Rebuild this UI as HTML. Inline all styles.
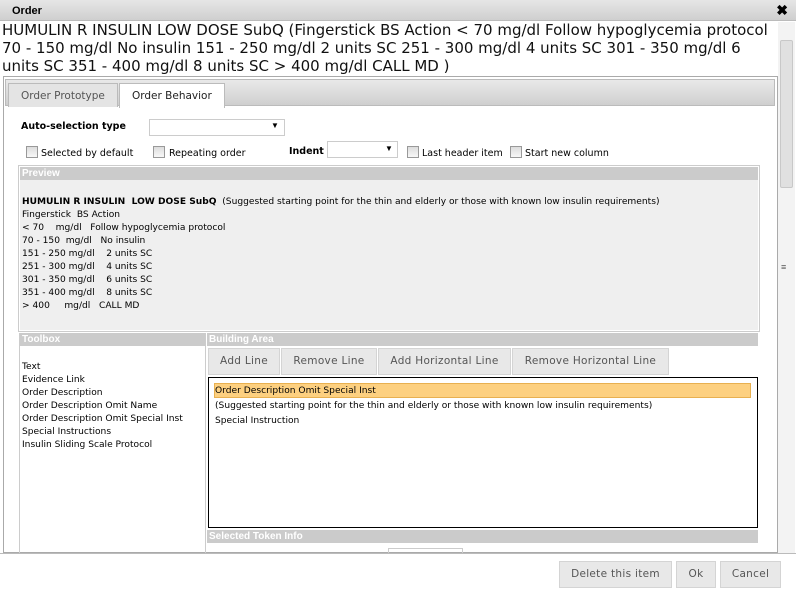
<!DOCTYPE html>
<html><head><style>
*{box-sizing:border-box;margin:0;padding:0}
body{width:796px;height:597px;background:#fff;font-family:"Liberation Sans",Arial,sans-serif;position:relative;overflow:hidden;color:#000}
.a{position:absolute}
.title{left:0;top:0;width:796px;height:21px;background:linear-gradient(#e6e6e6,#cfcfcf);border-bottom:1px solid #bbb;font-weight:bold;font-size:11px;padding:5px 12px}
.big{left:2px;top:21px;width:780px;font-size:15px;line-height:18px;color:#111;font-family:"DejaVu Sans",sans-serif;white-space:nowrap}
.frame{left:3px;top:76px;width:775px;height:477px;border:1px solid #aaa}
.tabs{left:5px;top:79px;width:770px;height:27px;background:linear-gradient(#e9e9e9,#cfcfcf);border:1px solid #bbb}
.tab{top:83px;height:24px;font-size:10.5px;padding:6px 12px;border:1px solid #bbb;border-bottom:none;color:#555;font-family:"DejaVu Sans",sans-serif}
.s{font-size:9.5px;font-family:"DejaVu Sans",sans-serif}
.cb{width:12px;height:12px;border:1px solid #999;background:linear-gradient(#ddd,#f8f8f8)}
.sel{height:17px;border:1px solid #ccc;background:#fff}
.hdr{background:#cbcbcb;color:#fff;font-size:10px;font-weight:bold;padding:1px 2px;height:13px;line-height:12px}
.btn{height:27px;background:#e8e8e8;border:1px solid #d4d4d4;color:#555;font-size:10.5px;text-align:center;line-height:25px;font-family:"DejaVu Sans",sans-serif;letter-spacing:0.3px}
.tl{font-family:"DejaVu Sans",sans-serif;line-height:13px;font-size:9.1px}
</style></head><body>
<div class="a title">Order</div>
<div class="a" style="right:8px;top:2px;font-size:14px;font-weight:bold">✖</div>
<div class="a big">HUMULIN R INSULIN LOW DOSE SubQ (Fingerstick BS Action &lt; 70 mg/dl Follow hypoglycemia protocol<br>70 - 150 mg/dl No insulin 151 - 250 mg/dl 2 units SC 251 - 300 mg/dl 4 units SC 301 - 350 mg/dl 6<br>units SC 351 - 400 mg/dl 8 units SC &gt; 400 mg/dl CALL MD )</div>
<div class="a" style="left:778px;top:22px;width:17px;height:531px;background:#f3f3f3"></div>
<div class="a" style="left:780px;top:40px;width:13px;height:148px;background:#e0e0e0;border:1px solid #c8c8c8;border-radius:2px"></div>
<div class="a" style="left:781px;top:262px;font-size:9px;color:#555">≡</div>
<div class="a frame"></div>
<div class="a tabs"></div>
<div class="a tab" style="left:8px;background:#e4e4e4">Order Prototype</div>
<div class="a tab" style="left:119px;background:#fff;color:#222;height:25px">Order Behavior</div>
<div class="a s" style="left:21px;top:121px;font-weight:bold;font-size:9.5px">Auto-selection type</div>
<div class="a sel" style="left:149px;top:119px;width:136px"></div><div class="a" style="left:271px;top:121px;font-size:8px">▼</div>
<div class="a cb" style="left:26px;top:146px"></div><div class="a s" style="left:41px;top:148px">Selected by default</div>
<div class="a cb" style="left:153px;top:146px"></div><div class="a s" style="left:169px;top:148px">Repeating order</div>
<div class="a s" style="left:289px;top:146px;font-weight:bold">Indent</div>
<div class="a sel" style="left:327px;top:141px;width:71px"></div><div class="a" style="left:385px;top:144px;font-size:8px">▼</div>
<div class="a cb" style="left:407px;top:146px"></div><div class="a s" style="left:422px;top:148px">Last header item</div>
<div class="a cb" style="left:510px;top:146px"></div><div class="a s" style="left:525px;top:148px">Start new column</div>
<div class="a" style="left:18px;top:165px;width:742px;height:167px;border:1px solid #ccc"></div>
<div class="a" style="left:20px;top:167px;width:738px;height:163px;background:#efefef"></div>
<div class="a hdr" style="left:20px;top:167px;width:738px">Preview</div>
<div class="a tl" style="left:22px;top:196px"><b>HUMULIN R INSULIN &nbsp;LOW DOSE SubQ</b> &nbsp;(Suggested starting point for the thin and elderly or those with known low insulin requirements)<br>Fingerstick &nbsp;BS Action<br>&lt; 70 &nbsp;&nbsp;&nbsp;mg/dl &nbsp;&nbsp;Follow hypoglycemia protocol<br>70 - 150 &nbsp;mg/dl &nbsp;&nbsp;No insulin<br>151 - 250 mg/dl &nbsp;&nbsp;&nbsp;2 units SC<br>251 - 300 mg/dl &nbsp;&nbsp;&nbsp;4 units SC<br>301 - 350 mg/dl &nbsp;&nbsp;&nbsp;6 units SC<br>351 - 400 mg/dl &nbsp;&nbsp;&nbsp;8 units SC<br>&gt; 400 &nbsp;&nbsp;&nbsp;&nbsp;mg/dl &nbsp;&nbsp;CALL MD</div>
<div class="a" style="left:19px;top:333px;width:187px;height:220px;border-left:1px solid #ccc;border-right:1px solid #ccc"></div>
<div class="a hdr" style="left:20px;top:333px;width:185px">Toolbox</div>
<div class="a tl" style="left:22px;top:361px">Text<br>Evidence Link<br>Order Description<br>Order Description Omit Name<br>Order Description Omit Special Inst<br>Special Instructions<br>Insulin Sliding Scale Protocol</div>
<div class="a hdr" style="left:207px;top:333px;width:551px">Building Area</div>
<div class="a btn" style="left:208px;top:348px;width:72px">Add Line</div>
<div class="a btn" style="left:281px;top:348px;width:96px">Remove Line</div>
<div class="a btn" style="left:378px;top:348px;width:133px">Add Horizontal Line</div>
<div class="a btn" style="left:512px;top:348px;width:157px">Remove Horizontal Line</div>
<div class="a" style="left:208px;top:377px;width:550px;height:151px;border:1px solid #000"></div>
<div class="a" style="left:214px;top:383px;width:537px;height:15px;background:#fdd080;border:1px solid #e8b050"></div>
<div class="a tl" style="left:215px;top:384px;line-height:15px">Order Description Omit Special Inst<br>(Suggested starting point for the thin and elderly or those with known low insulin requirements)<br>Special Instruction</div>
<div class="a hdr" style="left:207px;top:530px;width:551px">Selected Token Info</div>
<div class="a" style="left:388px;top:548px;width:75px;height:5px;border:1px solid #ccc;border-bottom:none"></div>
<div class="a" style="left:0;top:553px;width:796px;height:44px;background:#fff;border-top:1px solid #bbb"></div>
<div class="a btn" style="left:559px;top:561px;width:113px">Delete this item</div>
<div class="a btn" style="left:676px;top:561px;width:40px">Ok</div>
<div class="a btn" style="left:720px;top:561px;width:61px">Cancel</div>
</body></html>
